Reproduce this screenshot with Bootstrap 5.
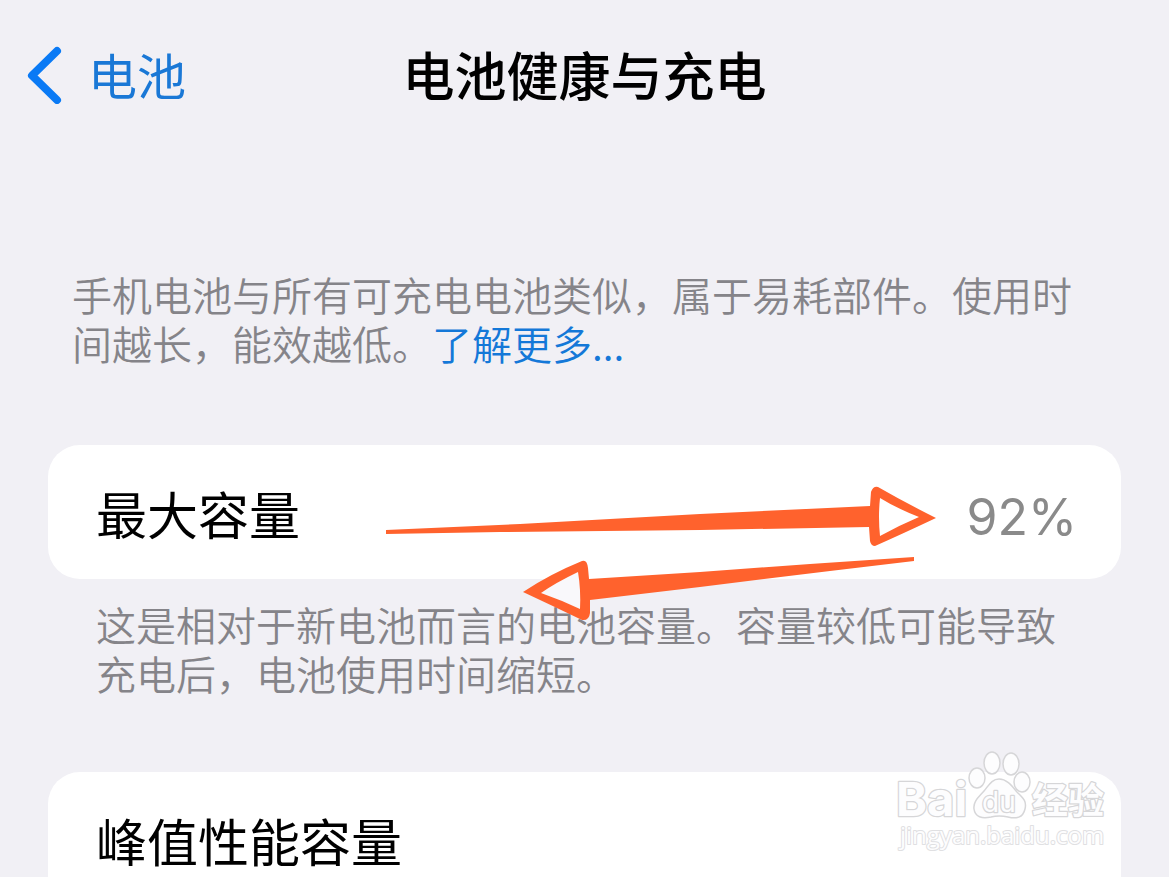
<!DOCTYPE html>
<html lang="zh-CN">
<head>
<meta charset="utf-8">
<meta name="viewport" content="width=device-width, initial-scale=1">
<title>电池健康与充电</title>
<link href="https://cdn.jsdelivr.net/npm/bootstrap@5.3.0/dist/css/bootstrap.min.css" rel="stylesheet">
<style>
  body { background: #f1f0f5; color: #000; font-family: "Noto Sans CJK SC", sans-serif; }
  .topbar { padding: 38px 24px 0; font-size: 52px; line-height: 72px; }
  .topbar h1 { font-size: inherit; line-height: inherit; font-weight: 500; }
  .back-link { color: #1a78d6; gap: 26px; font-size: 49px; }
  .ios-link { color: #1478d8; }
  .note { color: #858489; font-size: 40px; line-height: 49px; font-family: "Noto Sans CJK SC DemiLight", "Noto Sans CJK SC", sans-serif; font-weight: 350; }
  .intro { padding: 160px 72px 77px; }
  .group { margin: 0 48px; }
  .cell { background: #fff; border-radius: 32px; padding: 32px 44px 30px 48px; font-size: 51px; line-height: 72px; }
  .cell-open { border-radius: 32px 32px 0 0; padding-bottom: 0; }
  .cell-value { color: #8a8a8a; font-family: Inter, sans-serif; font-size: 50px; line-height: 50px; }
  .footnote { padding: 21px 48px 74px; }
  .arrows { left: 336px; top: 40px; }
  .watermark { right: 8px; top: -24px; }
</style>
</head>
<body>
<div class="min-vh-100 d-flex flex-column">
  <header class="topbar">
    <div class="row g-0 align-items-center">
      <div class="col-4 d-flex">
        <a href="#" class="back-link d-flex align-items-center text-decoration-none">
          <svg width="38" height="60" viewBox="0 0 38 60" fill="none" stroke="#0a7af5" stroke-width="8" stroke-linecap="round" stroke-linejoin="round" aria-hidden="true"><path d="M33 7 8 31.500 33 56"/></svg>
          <span>电池</span>
        </a>
      </div>
      <h1 class="col-4 text-center text-nowrap mb-0">电池健康与充电</h1>
    </div>
  </header>

  <main class="d-flex flex-column flex-grow-1">
    <p class="note intro mb-0">手机电池与所有可充电电池类似，属于易耗部件。使用时间越长，能效越低。<a href="#" class="ios-link text-decoration-none">了解更多...</a></p>

    <section class="group position-relative">
      <div class="cell d-flex justify-content-between align-items-baseline">
        <span>最大容量</span>
        <span class="cell-value">92%</span>
      </div>
      <p class="note footnote mb-0">这是相对于新电池而言的电池容量。容量较低可能导致充电后，电池使用时间缩短。</p>
      <!-- hand-drawn arrows over the capacity row -->
      <svg class="arrows position-absolute" width="556" height="140" viewBox="384 485 556 140" aria-hidden="true">
        <g fill="#ff622d">
          <path d="M386 530 L520 524 L700 514 L870 506 L871 492 Q873 486 878 487 Q904 502 936 518 Q902 534 875 546 Q871 546 870 541 L869 527 L700 530 L500 532 L386 534Z"/>
          <path d="M914 557 L914 561 L830 571 L700 587 L590 600 L590 613 Q589 621 582 620 Q553 606 523 592 Q550 574 582 561 Q587 559 588 568 L589 579 L700 572 L810 564Z"/>
        </g>
        <path fill="#fff" d="M880 498 Q878 517 880 536 Q900 525 919 517 Q896 508 880 498Z"/>
        <path fill="#f9f8fb" d="M578 572 Q555 583 541 593 Q561 600 580 609 Q581 590 578 572Z"/>
      </svg>
    </section>

    <section class="group position-relative d-flex flex-column flex-grow-1">
      <div class="cell cell-open flex-grow-1">峰值性能容量</div>
      <svg class="watermark position-absolute" width="220" height="108" viewBox="892 748 220 108" role="img" aria-label="Baidu 经验">
        <g fill="#fdfdfe" stroke="#d6d6d8" stroke-width="1.500">
          <ellipse cx="976" cy="778" rx="8" ry="10"/>
          <ellipse cx="991" cy="763" rx="8" ry="11"/>
          <ellipse cx="1010" cy="764" rx="8" ry="11"/>
          <ellipse cx="1021" cy="782" rx="8" ry="10"/>
          <path d="M998 779 C1006 779 1011 786 1016 792 C1022 798 1026 801 1024 809 C1022 818 1015 819 1007 817 Q998 815 990 817 C981 819 974 817 973 809 C972 801 978 797 983 791 C988 785 991 779 998 779Z"/>
          <g paint-order="stroke" stroke-width="2.500" stroke-linejoin="round">
            <text x="895" y="816" font-family="Inter" font-weight="700" font-size="47">Bai</text>
            <text x="981" y="812" font-family="Inter" font-size="28">du</text>
            <text x="1031" y="814" font-family="Noto Sans CJK SC" font-weight="700" font-size="36">经验</text>
            <text x="899" y="844" font-family="Open Sans" font-size="24" stroke="#e0e0e2" stroke-width="2">jingyan.baidu.com</text>
          </g>
        </g>
      </svg>
    </section>
  </main>
</div>
<script src="https://cdn.jsdelivr.net/npm/bootstrap@5.3.0/dist/js/bootstrap.bundle.min.js"></script>
</body>
</html>
